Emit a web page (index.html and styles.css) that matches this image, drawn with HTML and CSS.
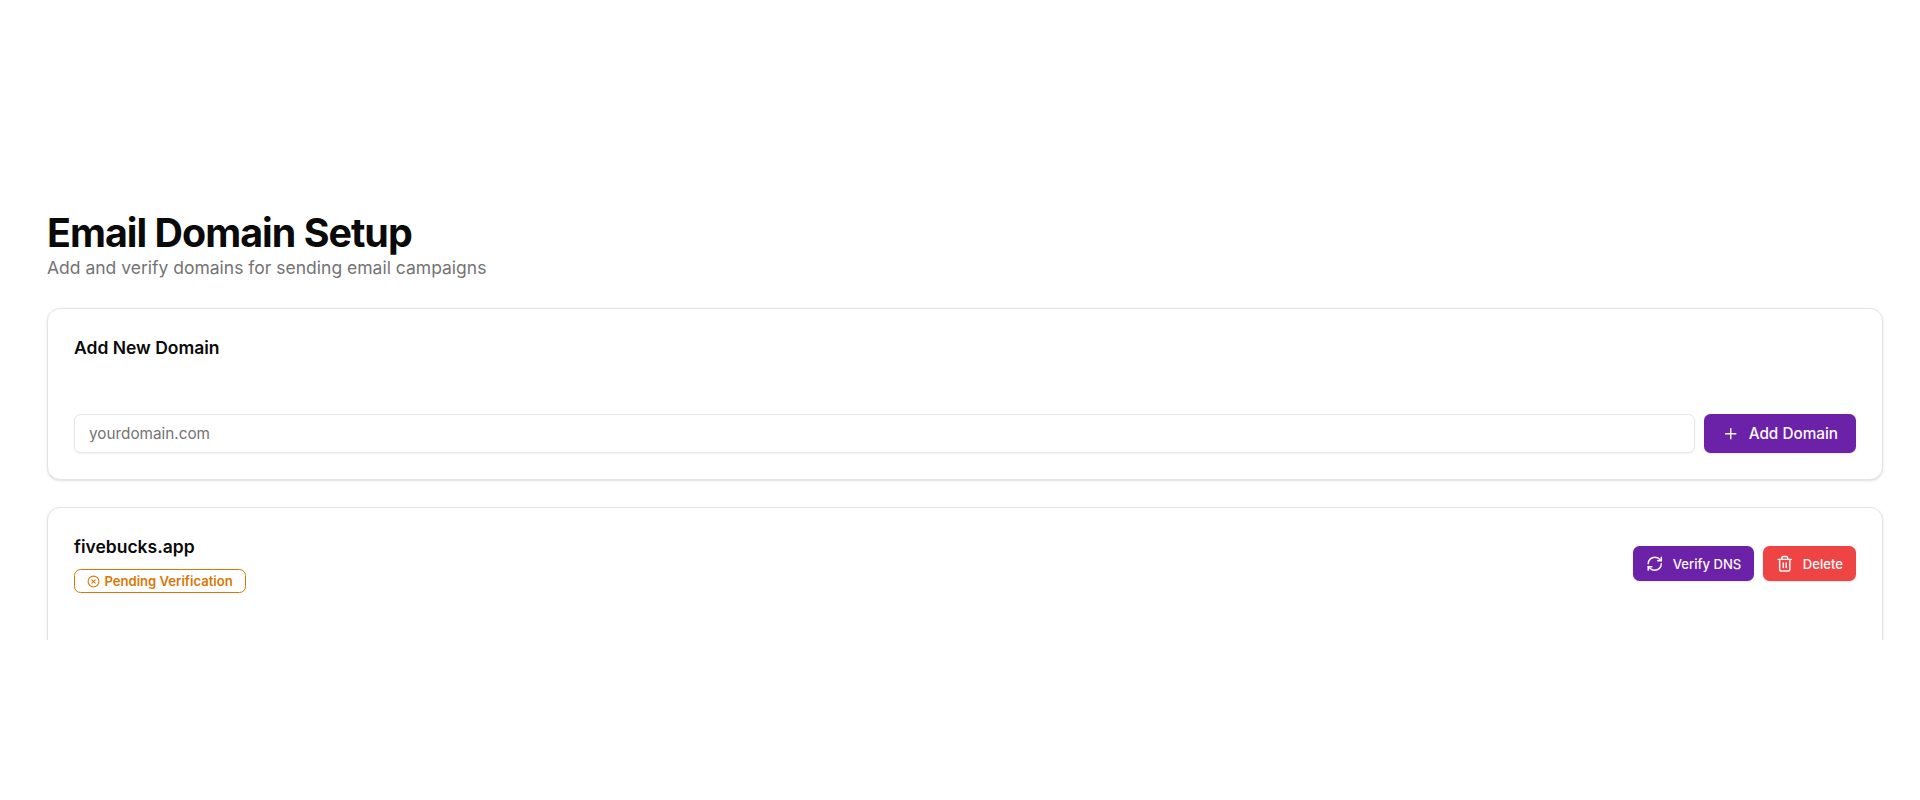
FILE: index.html
```html
<!DOCTYPE html>
<html lang="en">
<head>
  <meta charset="UTF-8">
  <meta name="viewport" content="width=device-width, initial-scale=1.0">
  <title>Email Domain Setup</title>
  <link rel="stylesheet" href="styles.css">
</head>
<body>
  <main class="page">
    <header class="page-head">
      <h1>Email Domain Setup</h1>
      <p>Add and verify domains for sending email campaigns</p>
    </header>

    <section class="card add-card">
      <h2>Add New Domain</h2>
      <form class="add-form">
        <input type="text" placeholder="yourdomain.com">
        <button type="button" class="btn btn-primary btn-large">
          <svg viewBox="0 0 24 24" fill="none" stroke="currentColor" stroke-width="2" stroke-linecap="round" stroke-linejoin="round"><path d="M5 12h14"/><path d="M12 5v14"/></svg>
          Add Domain
        </button>
      </form>
    </section>

    <section class="card domain-card">
      <div class="domain-row">
        <div class="domain-info">
          <h3>fivebucks.app</h3>
          <span class="badge">
            <svg viewBox="0 0 24 24" fill="none" stroke="currentColor" stroke-width="2" stroke-linecap="round" stroke-linejoin="round"><circle cx="12" cy="12" r="10"/><path d="m15 9-6 6"/><path d="m9 9 6 6"/></svg>
            Pending Verification
          </span>
        </div>
        <div class="domain-actions">
          <button type="button" class="btn btn-primary">
            <svg viewBox="0 0 24 24" fill="none" stroke="currentColor" stroke-width="2" stroke-linecap="round" stroke-linejoin="round"><path d="M3 12a9 9 0 0 1 9-9 9.75 9.75 0 0 1 6.74 2.74L21 8"/><path d="M21 3v5h-5"/><path d="M21 12a9 9 0 0 1-9 9 9.75 9.75 0 0 1-6.74-2.74L3 16"/><path d="M8 16H3v5"/></svg>
            Verify DNS
          </button>
          <button type="button" class="btn btn-danger">
            <svg viewBox="0 0 24 24" fill="none" stroke="currentColor" stroke-width="2" stroke-linecap="round" stroke-linejoin="round"><path d="M3 6h18"/><path d="M19 6v14c0 1-1 2-2 2H7c-1 0-2-1-2-2V6"/><path d="M8 6V4c0-1 1-2 2-2h4c1 0 2 1 2 2v2"/><path d="M10 11v6"/><path d="M14 11v6"/></svg>
            Delete
          </button>
        </div>
      </div>
    </section>
  </main>
</body>
</html>
```

FILE: styles.css
```css
* { box-sizing: border-box; }
html, body { margin: 0; background: #fff; }
body {
  font-family: Inter, "Liberation Sans", sans-serif;
  color: #0a0a0a;
  height: 800px;
  overflow: hidden;
}
.page {
  height: 640px;
  overflow: hidden;
  padding: 211px 37px 0 47px;
}
.page-head h1 {
  margin: 0;
  font-size: 39.4px;
  line-height: 44px;
  font-weight: 700;
  letter-spacing: -0.98px;
}
.page-head p {
  margin: 0;
  font-size: 17.5px;
  line-height: 26px;
  color: #737373;
}
.card {
  background: #fff;
  border: 1px solid #e5e5e5;
  border-radius: 13px;
  box-shadow: 0 1px 3px rgba(0,0,0,0.1), 0 1px 2px -1px rgba(0,0,0,0.1);
}
.add-card {
  margin-top: 27px;
  height: 172px;
  padding: 26px;
}
.add-card h2 {
  margin: 0;
  font-size: 17.5px;
  line-height: 26px;
  font-weight: 600;
}
.add-form {
  display: flex;
  gap: 9px;
  margin-top: 53px;
}
.add-form input {
  flex: 1;
  height: 39px;
  padding: 0 14px;
  font: 15.3px Inter, sans-serif;
  border: 1px solid #e5e5e5;
  border-radius: 6.5px;
  box-shadow: 0 1px 2px rgba(0,0,0,0.05);
  outline: none;
}
.add-form input::placeholder { color: #737373; }
.btn {
  display: inline-flex;
  align-items: center;
  gap: 9px;
  height: 35px;
  padding: 0 13px;
  border: none;
  border-radius: 6.5px;
  font: 500 13.1px Inter, sans-serif;
  color: #fafafa;
  box-shadow: 0 1px 2px rgba(0,0,0,0.1);
}
.btn svg {
  width: 17.5px;
  height: 17.5px;
}
.btn-large {
  height: 39px;
  padding: 0 18px;
  font-size: 15.3px;
}
.btn-primary { background: #6b21a8; }
.btn-danger { background: #ef4444; }
.domain-card {
  margin-top: 27px;
  height: 200px;
  padding: 26px;
}
.domain-row {
  display: flex;
  justify-content: space-between;
  align-items: center;
}
.domain-info h3 {
  margin: 0;
  font-size: 17.5px;
  line-height: 26px;
  font-weight: 600;
}
.badge {
  display: inline-flex;
  align-items: center;
  gap: 4.4px;
  margin-top: 9px;
  padding: 3px 12px;
  border: 1px solid #d97706;
  border-radius: 6.5px;
  font-size: 13.1px;
  line-height: 16px;
  font-weight: 600;
  color: #d97706;
}
.badge svg {
  width: 13px;
  height: 13px;
}
.domain-actions {
  display: flex;
  gap: 9px;
}
```
